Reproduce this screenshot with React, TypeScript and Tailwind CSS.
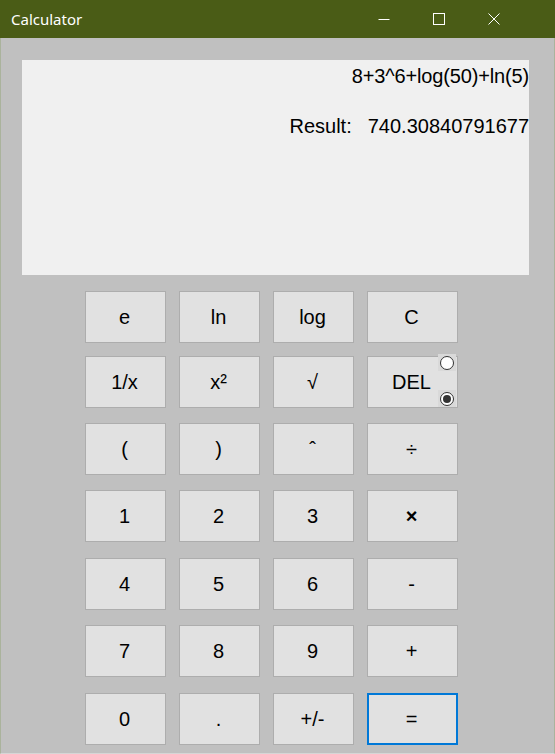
import React from "react";

type Key = { label: string; cls?: string };

const rows: { gap: string; keys: Key[] }[] = [
  { gap: "mt-[16px]", keys: [{ label: "e" }, { label: "ln" }, { label: "log" }, { label: "C" }] },
  { gap: "mt-[13px]", keys: [{ label: "1/x" }, { label: "x²" }, { label: "√" }, { label: "DEL" }] },
  { gap: "mt-[15px]", keys: [{ label: "(" }, { label: ")" }, { label: "ˆ" }, { label: "÷", cls: "text-[15px]" }] },
  { gap: "mt-[15px]", keys: [{ label: "1" }, { label: "2" }, { label: "3" }, { label: "×", cls: "text-[15px] font-bold" }] },
  { gap: "mt-[16px]", keys: [{ label: "4" }, { label: "5" }, { label: "6" }, { label: "-", cls: "text-[18px]" }] },
  { gap: "mt-[15px]", keys: [{ label: "7" }, { label: "8" }, { label: "9" }, { label: "+" }] },
  { gap: "mt-[16px]", keys: [{ label: "0" }, { label: "." }, { label: "+/-" }, { label: "=" }] },
];

const TitleBar = () => (
  <div className="flex h-[38px] items-center bg-[#4a5c16] text-white">
    <span className="ml-[11px] text-[15px] font-['Noto_Sans',sans-serif]">Calculator</span>
    <div className="ml-auto flex h-full items-center">
      {/* minimize */}
      <div className="flex h-full w-[55px] items-center justify-center">
        <svg width="12" height="12" viewBox="0 0 12 12">
          <line x1="0.5" y1="6.5" x2="11.5" y2="6.5" stroke="white" strokeWidth="1" />
        </svg>
      </div>
      {/* maximize */}
      <div className="flex h-full w-[55px] items-center justify-center">
        <svg width="12" height="12" viewBox="0 0 12 12">
          <rect x="0.5" y="0.5" width="11" height="11" fill="none" stroke="white" strokeWidth="1" />
        </svg>
      </div>
      {/* close */}
      <div className="mr-[34px] flex h-full w-[55px] items-center justify-center">
        <svg width="12" height="12" viewBox="0 0 12 12">
          <path d="M0.5 0.5 L11.5 11.5 M11.5 0.5 L0.5 11.5" stroke="white" strokeWidth="1" />
        </svg>
      </div>
    </div>
  </div>
);

const Radio = ({ checked }: { checked?: boolean }) => (
  <div className="flex h-[17px] w-[18px] items-center justify-center bg-[#d9d9d9]">
    <div className="flex h-[14px] w-[14px] items-center justify-center rounded-full border border-[#333333] bg-white">
      {checked && <div className="h-[8px] w-[8px] rounded-full bg-[#333333]" />}
    </div>
  </div>
);

export default function App() {
  return (
    <div className="flex h-[754px] w-[555px] flex-col bg-[#c0c0c0] font-['Liberation_Sans',Arial,sans-serif] text-black">
      <TitleBar />
      <div className="flex flex-1 flex-col border-x border-b border-x-[#aab39c] border-b-[#d6d6d6]">
        {/* display */}
        <div className="ml-[21px] mt-[22px] h-[215px] w-[507px] bg-[#f0f0f0] pt-[5px] text-[20px] leading-[23px]">
          <div className="text-right tracking-[-0.15px]">8+3^6+log(50)+ln(5)</div>
          <div className="mt-[27px] flex justify-end gap-[16px]">
            <span>Result:</span>
            <span>740.30840791677</span>
          </div>
        </div>

        {/* keypad */}
        <div className="ml-[84px] flex flex-col">
          {rows.map((row, r) => (
            <div key={r} className={`${row.gap} flex gap-[13px]`}>
              {row.keys.map((k, i) => {
                const last = i === 3;
                const isEq = k.label === "=";
                return (
                  <div key={i} className={`relative ${last ? "w-[91px]" : "w-[81px]"} h-[52px]`}>
                    <button
                      className={`flex h-full w-full items-center justify-center pr-[2px] bg-[#e1e1e1] text-[20px] ${
                        isEq ? "border-2 border-[#0078d7]" : "border border-[#adadad]"
                      } ${k.cls ?? ""}`}
                    >
                      {k.label}
                    </button>
                    {k.label === "DEL" && (
                      <div className="absolute right-[2px] top-[-2px] flex h-[53px] flex-col justify-between">
                        <Radio />
                        <Radio checked />
                      </div>
                    )}
                  </div>
                );
              })}
            </div>
          ))}
        </div>
      </div>
    </div>
  );
}
